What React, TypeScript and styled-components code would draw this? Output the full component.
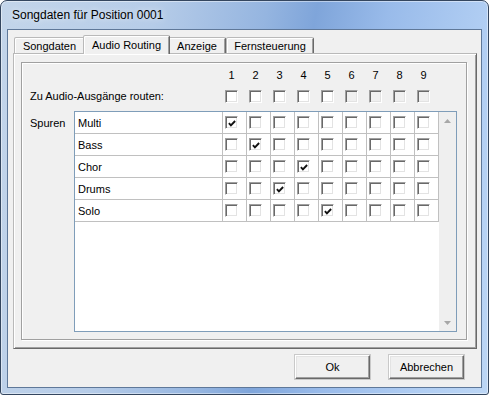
import React from "react";
import styled, { createGlobalStyle } from "styled-components";

const GlobalStyle = createGlobalStyle`
  html, body { margin: 0; padding: 0; background: #ffffff; }
  body { font-family: "Liberation Sans", Arial, sans-serif; font-size: 11px; color: #000; }
  *, *::before, *::after { box-sizing: border-box; }
`;

const Window = styled.div`
  width: 489px;
  height: 395px;
  display: flex;
  flex-direction: column;
  padding: 0 6px 6px 6px;
  border: 1px solid #34465f;
  border-radius: 7px 7px 3px 3px;
  background: linear-gradient(100deg, #c3d5ea 0%, #b6cce8 28%, #95b5e0 48%, #7fa5da 57%, #99bbea 70%, #b1cef3 88%, #bcd6f5 100%);
  box-shadow: inset 0 0 0 1px rgba(255, 255, 255, 0.45);
`;

const TitleBar = styled.div`
  height: 28px;
  display: flex;
  align-items: center;
  padding: 0 0 1px 5px;
`;

const Title = styled.span`
  font-family: "Liberation Sans", Arial, sans-serif;
  font-size: 12px;
  color: #000;
  text-shadow: 0 0 6px rgba(255, 255, 255, 0.8);
`;

const Client = styled.div`
  flex: 1;
  display: flex;
  flex-direction: column;
  border: 1px solid #5f7899;
  background: #f0f0f0;
  padding: 5px 4px 8px 5px;
`;

const TabControl = styled.div`
  display: flex;
  flex-direction: column;
`;

const TabStrip = styled.div`
  height: 18px;
  display: flex;
  align-items: flex-end;
  padding-left: 1px;
`;

const Tab = styled.div<{ $selected?: boolean; $width: number }>`
  position: relative;
  z-index: ${(p) => (p.$selected ? 1 : 0)};
  width: ${(p) => p.$width + (p.$selected ? 4 : 0)}px;
  height: ${(p) => (p.$selected ? 19 : 16)}px;
  margin: ${(p) => (p.$selected ? "0 -2px -1px -2px" : "0")};
  display: flex;
  align-items: center;
  justify-content: center;
  padding-top: ${(p) => (p.$selected ? 0 : 1)}px;
  border: 1px solid;
  border-bottom: none;
  border-color: #b9b9b9 #696969 transparent #b9b9b9;
  border-radius: 2px 2px 0 0;
  box-shadow: inset 1px 1px 0 #ffffff, inset -1px 0 0 #a0a0a0;
  background: #f0f0f0;
  white-space: nowrap;
`;

const TabBody = styled.div`
  height: 296px;
  display: flex;
  border: 1px solid;
  border-color: #b9b9b9 #696969 #696969 #b9b9b9;
  box-shadow: inset 1px 1px 0 #ffffff, inset -1px -1px 0 #a0a0a0;
  background: #f0f0f0;
`;

const Panel = styled.div`
  flex: 1;
  display: flex;
  flex-direction: column;
  margin: 8px 9px 8px 7px;
  padding: 6px 0 0 8px;
  border: 1px solid #a0a0a0;
  box-shadow: inset 1px 1px 0 #ffffff, 1px 1px 0 #ffffff;
`;

const HeaderRow = styled.div<{ $gap?: number }>`
  display: flex;
  align-items: center;
  height: 13px;
  margin-top: ${(p) => p.$gap ?? 0}px;
`;

const HeaderLabel = styled.div`
  width: 195px;
  flex: none;
  line-height: 13px;
  white-space: nowrap;
`;

const NumCell = styled.div`
  width: 24px;
  flex: none;
  padding-right: 11px;
  text-align: center;
  line-height: 13px;
`;

const HeaderCell = styled.div`
  width: 24px;
  flex: none;
  display: flex;
`;

const Box = styled.span<{ $disabled?: boolean }>`
  width: 13px;
  height: 13px;
  flex: none;
  display: inline-flex;
  align-items: center;
  justify-content: center;
  border: 1px solid;
  border-color: #a0a0a0 #ffffff #ffffff #a0a0a0;
  box-shadow: inset 1px 1px 0 #696969, inset -1px -1px 0 #e3e3e3;
  background: ${(p) => (p.$disabled ? "#f0f0f0" : "#ffffff")};
  padding: 1px 0 0 1px;
`;

const TrackSection = styled.div`
  display: flex;
  margin-top: 8px;
`;

const SideLabel = styled.div`
  width: 44px;
  flex: none;
  padding-top: 3px;
  line-height: 19px;
`;

const ListView = styled.div`
  width: 383px;
  height: 221px;
  display: flex;
  border: 1px solid #7f9db9;
  background: #ffffff;
`;

const Rows = styled.div`
  width: 364px;
  display: flex;
  flex-direction: column;
`;

const Row = styled.div`
  height: 22px;
  display: flex;
  border-bottom: 1px solid #c0c0c0;
`;

const NameCell = styled.div`
  width: 148px;
  flex: none;
  border-right: 1px solid #c0c0c0;
  padding: 2px 0 0 3px;
  line-height: 19px;
`;

const CheckCell = styled.div`
  width: 24px;
  flex: none;
  display: flex;
  align-items: center;
  padding-left: 2px;
  border-right: 1px solid #c0c0c0;
`;

const ScrollBar = styled.div`
  width: 17px;
  display: flex;
  flex-direction: column;
  justify-content: space-between;
  background: #efefef;
`;

const ScrollButton = styled.div`
  height: 17px;
  display: flex;
  align-items: center;
  justify-content: center;
`;

const ButtonBar = styled.div`
  display: flex;
  justify-content: flex-end;
  gap: 19px;
  margin-top: 6px;
  padding-right: 13px;
`;

const Button = styled.button`
  width: 75px;
  height: 24px;
  padding: 0;
  font-family: "Liberation Sans", Arial, sans-serif;
  font-size: 11px;
  color: #000;
  background: #f0f0f0;
  border: 1px solid;
  border-color: #ffffff #696969 #696969 #ffffff;
  box-shadow: inset -1px -1px 0 #a0a0a0, inset 1px 1px 0 #e3e3e3, 0 0 0 0 transparent;
  outline: 1px solid #c9c9c9;
  outline-offset: 0;
`;

const Check = () => (
  <svg width="8" height="7" viewBox="0 0 8 7">
    <polyline points="0.9,3.2 2.9,5.4 7.1,1.0" fill="none" stroke="#111" strokeWidth="1.9" />
  </svg>
);

const Arrow = ({ up }: { up?: boolean }) => (
  <svg width="7" height="4" viewBox="0 0 7 4">
    <polygon points={up ? "0,4 7,4 3.5,0" : "0,0 7,0 3.5,4"} fill="#a7a7a7" />
  </svg>
);

const tabs = [
  { label: "Songdaten", width: 71 },
  { label: "Audio Routing", width: 83, selected: true },
  { label: "Anzeige", width: 58 },
  { label: "Fernsteuerung", width: 88 },
];

const columns = [1, 2, 3, 4, 5, 6, 7, 8, 9];

const tracks = [
  { name: "Multi", out: 1 },
  { name: "Bass", out: 2 },
  { name: "Chor", out: 4 },
  { name: "Drums", out: 3 },
  { name: "Solo", out: 5 },
];

export default function App() {
  return (
    <>
      <GlobalStyle />
      <Window>
        <TitleBar>
          <Title>Songdaten für Position 0001</Title>
        </TitleBar>
        <Client>
          <TabControl>
            <TabStrip>
              {tabs.map((t) => (
                <Tab key={t.label} $selected={t.selected} $width={t.width}>
                  {t.label}
                </Tab>
              ))}
            </TabStrip>
            <TabBody>
              <Panel>
                <HeaderRow>
                  <HeaderLabel />
                  {columns.map((c) => (
                    <NumCell key={c}>{c}</NumCell>
                  ))}
                </HeaderRow>
                <HeaderRow $gap={8}>
                  <HeaderLabel>Zu Audio-Ausgänge routen:</HeaderLabel>
                  {columns.map((c) => (
                    <HeaderCell key={c}>
                      <Box $disabled={c > 5} />
                    </HeaderCell>
                  ))}
                </HeaderRow>
                <TrackSection>
                  <SideLabel>Spuren</SideLabel>
                  <ListView>
                    <Rows>
                      {tracks.map((t) => (
                        <Row key={t.name}>
                          <NameCell>{t.name}</NameCell>
                          {columns.map((c) => (
                            <CheckCell key={c}>
                              <Box>{t.out === c ? <Check /> : null}</Box>
                            </CheckCell>
                          ))}
                        </Row>
                      ))}
                    </Rows>
                    <ScrollBar>
                      <ScrollButton>
                        <Arrow up />
                      </ScrollButton>
                      <ScrollButton>
                        <Arrow />
                      </ScrollButton>
                    </ScrollBar>
                  </ListView>
                </TrackSection>
              </Panel>
            </TabBody>
          </TabControl>
          <ButtonBar>
            <Button>Ok</Button>
            <Button>Abbrechen</Button>
          </ButtonBar>
        </Client>
      </Window>
    </>
  );
}
